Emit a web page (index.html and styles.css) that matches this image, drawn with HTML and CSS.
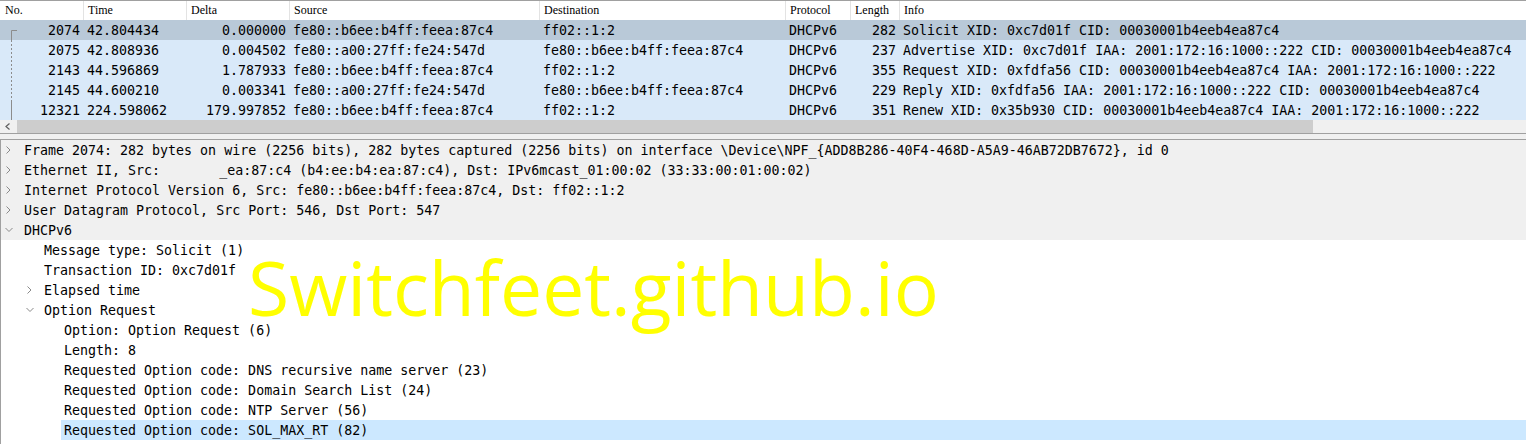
FILE: index.html
```html
<!DOCTYPE html>
<html>
<head>
<meta charset="utf-8">
<link rel="stylesheet" href="styles.css">
</head>
<body>
<div class="app">
  <div class="plist">
    <div class="pgrid phead">
      <div class="hc first">No.</div>
      <div class="hc">Time</div>
      <div class="hc">Delta</div>
      <div class="hc">Source</div>
      <div class="hc">Destination</div>
      <div class="hc">Protocol</div>
      <div class="hc">Length</div>
      <div class="hc">Info</div>
    </div>

    <div class="pgrid prow sel">
      <div class="c no"><svg class="rel" width="20" height="20" viewBox="0 0 20 20"><path d="M11.5 10.5 H17 M11.5 10.5 V20" stroke="#8c8c8c" fill="none"/></svg><span>2074</span></div>
      <div class="c">42.804434</div>
      <div class="c r">0.000000</div>
      <div class="c">fe80::b6ee:b4ff:feea:87c4</div>
      <div class="c">ff02::1:2</div>
      <div class="c">DHCPv6</div>
      <div class="c r">282</div>
      <div class="c">Solicit XID: 0xc7d01f CID: 00030001b4eeb4ea87c4</div>
    </div>
    <div class="pgrid prow">
      <div class="c no"><svg class="rel" width="20" height="20" viewBox="0 0 20 20"><path d="M11.5 0 V20" stroke="#8c8c8c" stroke-dasharray="2 2" fill="none"/></svg><span>2075</span></div>
      <div class="c">42.808936</div>
      <div class="c r">0.004502</div>
      <div class="c">fe80::a00:27ff:fe24:547d</div>
      <div class="c">fe80::b6ee:b4ff:feea:87c4</div>
      <div class="c">DHCPv6</div>
      <div class="c r">237</div>
      <div class="c">Advertise XID: 0xc7d01f IAA: 2001:172:16:1000::222 CID: 00030001b4eeb4ea87c4</div>
    </div>
    <div class="pgrid prow">
      <div class="c no"><svg class="rel" width="20" height="20" viewBox="0 0 20 20"><path d="M11.5 0 V20" stroke="#8c8c8c" stroke-dasharray="2 2" fill="none"/></svg><span>2143</span></div>
      <div class="c">44.596869</div>
      <div class="c r">1.787933</div>
      <div class="c">fe80::b6ee:b4ff:feea:87c4</div>
      <div class="c">ff02::1:2</div>
      <div class="c">DHCPv6</div>
      <div class="c r">355</div>
      <div class="c">Request XID: 0xfdfa56 CID: 00030001b4eeb4ea87c4 IAA: 2001:172:16:1000::222</div>
    </div>
    <div class="pgrid prow">
      <div class="c no"><svg class="rel" width="20" height="20" viewBox="0 0 20 20"><path d="M11.5 0 V20" stroke="#8c8c8c" stroke-dasharray="2 2" fill="none"/></svg><span>2145</span></div>
      <div class="c">44.600210</div>
      <div class="c r">0.003341</div>
      <div class="c">fe80::a00:27ff:fe24:547d</div>
      <div class="c">fe80::b6ee:b4ff:feea:87c4</div>
      <div class="c">DHCPv6</div>
      <div class="c r">229</div>
      <div class="c">Reply XID: 0xfdfa56 IAA: 2001:172:16:1000::222 CID: 00030001b4eeb4ea87c4</div>
    </div>
    <div class="pgrid prow">
      <div class="c no"><svg class="rel" width="20" height="20" viewBox="0 0 20 20"><path d="M11.5 0 V20" stroke="#8c8c8c" fill="none"/></svg><span>12321</span></div>
      <div class="c">224.598062</div>
      <div class="c r">179.997852</div>
      <div class="c">fe80::b6ee:b4ff:feea:87c4</div>
      <div class="c">ff02::1:2</div>
      <div class="c">DHCPv6</div>
      <div class="c r">351</div>
      <div class="c">Renew XID: 0x35b930 CID: 00030001b4eeb4ea87c4 IAA: 2001:172:16:1000::222</div>
    </div>

    <div class="hscroll">
      <div class="sarrow"><svg width="17" height="13" viewBox="0 0 17 13"><path d="M9.5 3.5 L6 6.5 L9.5 9.5" stroke="#606060" fill="none" stroke-width="1.2"/></svg></div>
      <div class="thumb"></div>
      <div class="track"></div>
    </div>
  </div>

  <div class="splitter"></div>

  <div class="tree">
    <div class="trow hl l0"><span class="exp"><svg width="12" height="20" viewBox="0 0 12 20"><path d="M3.5 6.5 L7 10 L3.5 13.5" stroke="#8a8a8a" fill="none"/></svg></span><span class="lbl">Frame 2074: 282 bytes on wire (2256 bits), 282 bytes captured (2256 bits) on interface \Device\NPF_{ADD8B286-40F4-468D-A5A9-46AB72DB7672}, id 0</span></div>
    <div class="trow hl l0"><span class="exp"><svg width="12" height="20" viewBox="0 0 12 20"><path d="M3.5 6.5 L7 10 L3.5 13.5" stroke="#8a8a8a" fill="none"/></svg></span><span class="lbl">Ethernet II, Src:       <span class="nudge">_ea:87:c4 (b4:ee:b4:ea:87:c4), Dst: IPv6mcast_01:00:02 (33:33:00:01:00:02)</span></span></div>
    <div class="trow hl l0"><span class="exp"><svg width="12" height="20" viewBox="0 0 12 20"><path d="M3.5 6.5 L7 10 L3.5 13.5" stroke="#8a8a8a" fill="none"/></svg></span><span class="lbl">Internet Protocol Version 6, Src: fe80::b6ee:b4ff:feea:87c4, Dst: ff02::1:2</span></div>
    <div class="trow hl l0"><span class="exp"><svg width="12" height="20" viewBox="0 0 12 20"><path d="M3.5 6.5 L7 10 L3.5 13.5" stroke="#8a8a8a" fill="none"/></svg></span><span class="lbl">User Datagram Protocol, Src Port: 546, Dst Port: 547</span></div>
    <div class="trow hl l0"><span class="exp"><svg width="12" height="20" viewBox="0 0 12 20"><path d="M2.5 8 L6 11.5 L9.5 8" stroke="#8a8a8a" fill="none"/></svg></span><span class="lbl">DHCPv6</span></div>
    <div class="trow l1"><span class="exp"></span><span class="lbl">Message type: Solicit (1)</span></div>
    <div class="trow l1"><span class="exp"></span><span class="lbl">Transaction ID: 0xc7d01f</span></div>
    <div class="trow l1"><span class="exp"><svg width="12" height="20" viewBox="0 0 12 20"><path d="M4.5 6.5 L8 10 L4.5 13.5" stroke="#8a8a8a" fill="none"/></svg></span><span class="lbl">Elapsed time</span></div>
    <div class="trow l1"><span class="exp"><svg width="12" height="20" viewBox="0 0 12 20"><path d="M3.5 8 L7 11.5 L10.5 8" stroke="#8a8a8a" fill="none"/></svg></span><span class="lbl">Option Request</span></div>
    <div class="trow l2"><span class="exp"></span><span class="lbl">Option: Option Request (6)</span></div>
    <div class="trow l2"><span class="exp"></span><span class="lbl">Length: 8</span></div>
    <div class="trow l2"><span class="exp"></span><span class="lbl">Requested Option code: DNS recursive name server (23)</span></div>
    <div class="trow l2"><span class="exp"></span><span class="lbl">Requested Option code: Domain Search List (24)</span></div>
    <div class="trow l2"><span class="exp"></span><span class="lbl">Requested Option code: NTP Server (56)</span></div>
    <div class="trow l2 tsel"><span class="exp"></span><span class="lbl">Requested Option code: SOL_MAX_RT (82)</span></div>
  </div>

  <div class="watermark">Switchfeet.github.io</div>
</div>
</body>
</html>
```

FILE: styles.css
```css
* { box-sizing: border-box; }
html, body {
  margin: 0;
  padding: 0;
  background: #ffffff;
}
.app {
  position: relative;
  width: 1526px;
  height: 445px;
  overflow: hidden;
  background: #ffffff;
}

/* ---------- packet list ---------- */
.plist {
  border-bottom: 1px solid #a0a0a0;
}
.pgrid {
  display: grid;
  grid-template-columns: 83px 103px 103px 250px 246px 65px 49px 1fr;
  height: 20px;
}
.phead {
  border-top: 1px solid #a0a0a0;
  background: #ffffff;
  font-family: "Liberation Serif", serif;
  font-size: 12px;
  color: #000;
}
.hc {
  border-left: 1px solid #e3e3e3;
  padding-left: 4px;
  line-height: 19px;
  white-space: nowrap;
  overflow: hidden;
}
.hc.first {
  border-left: none;
  padding-left: 5px;
}
.prow {
  background: #d9e9f9;
  font-family: "DejaVu Sans Mono", monospace;
  font-size: 13.3px;
  color: #000;
}
.prow.sel {
  background: #b9c9d8;
}
.c {
  height: 20px;
  line-height: 22px;
  white-space: nowrap;
  overflow: hidden;
  padding: 0 3px 0 4px;
}
.c.r {
  text-align: right;
}
.c.no {
  display: flex;
  justify-content: space-between;
  padding-left: 0;
}
.rel {
  display: block;
  flex: none;
}

.hscroll {
  display: flex;
  height: 13px;
  background: #f0f0f0;
}
.sarrow {
  width: 17px;
  flex: none;
}
.sarrow svg { display: block; }
.thumb {
  width: 1296px;
  flex: none;
  background: #cdcdcd;
}
.track {
  flex: 1;
}

.splitter {
  height: 5px;
  background: #f0f0f0;
}

/* ---------- detail tree ---------- */
.tree {
  border-top: 1px solid #a0a0a0;
  border-left: 1px solid #a0a0a0;
  height: 305px;
  font-family: "DejaVu Sans Mono", monospace;
  font-size: 13.3px;
  color: #000;
}
.trow {
  display: flex;
  height: 20px;
  align-items: stretch;
  white-space: pre;
}
.trow.hl {
  background: #f0f0f0;
}
.trow.l0 { padding-left: 0; }
.trow.l1 { padding-left: 20px; }
.trow.l2 { padding-left: 40px; }
.exp {
  width: 20px;
  flex: none;
  display: flex;
  padding-left: 2px;
}
.exp svg { display: block; }
.lbl {
  flex: 1;
  height: 20px;
  overflow: hidden;
  line-height: 22px;
  padding-left: 3px;
}
.nudge {
  padding-left: 3px;
}
.trow.tsel .lbl {
  background: #cce8ff;
}

/* ---------- watermark overlay ---------- */
.watermark {
  position: absolute;
  left: 248px;
  top: 250px;
  font-family: "Open Sans", sans-serif;
  font-size: 75px;
  line-height: 75px;
  color: #ffff00;
  white-space: nowrap;
  pointer-events: none;
}
```
